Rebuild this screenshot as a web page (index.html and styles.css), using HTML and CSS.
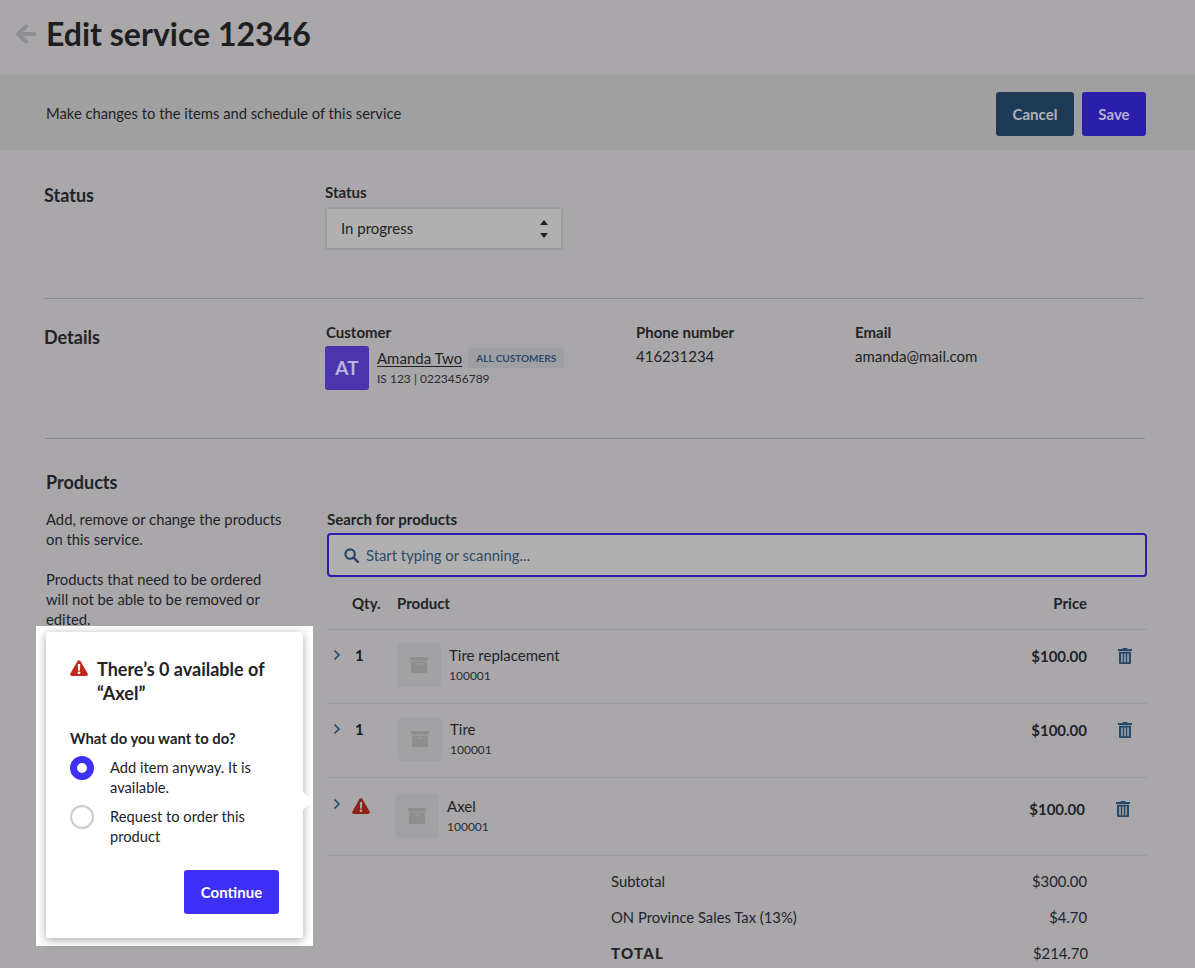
FILE: index.html
```html
<!DOCTYPE html>
<html lang="en">
<head>
<meta charset="utf-8">
<title>Edit service 12346</title>
<link rel="stylesheet" href="styles.css">
</head>
<body>
<svg class="defs" width="0" height="0" aria-hidden="true">
  <symbol id="warn" viewBox="0 0 18 16"><path fill-rule="evenodd" d="M9 0.2c.7 0 1.3.4 1.6 1l7 12.2c.7 1.2-.2 2.5-1.5 2.5H1.9C.6 15.9-.3 14.6.4 13.4l7-12.2c.3-.6.9-1 1.6-1zM7.8 4.6l.3 5.6c0 .3.3.5.5.5h.8c.3 0 .5-.2.5-.5l.3-5.6c0-.3-.2-.6-.5-.6H8.3c-.3 0-.5.3-.5.6zM9 11.4a1.4 1.4 0 1 0 0 2.8 1.4 1.4 0 0 0 0-2.8z"/></symbol>
  <symbol id="box" viewBox="0 0 18 16"><path d="M0 0h18v3.6H0z"/><path fill-rule="evenodd" d="M1 4.6h16V16H1zM6.5 6.4v1.1h5V6.4z"/></symbol>
  <symbol id="trash" viewBox="0 0 14 16"><path fill-rule="evenodd" d="M5 0h4l.6 1.1H14v1.8H0V1.1h4.400zM1 3.800h12V15a1 1 0 0 1-1 1H2a1 1 0 0 1-1-1zM3.200 5.600v8.600h1.500V5.600zM6.250 5.600v8.600h1.500V5.600zM9.300 5.600v8.600h1.500V5.600z"/></symbol>
  <symbol id="chev" viewBox="0 0 8 12"><path d="M1.500 1.500L6 6l-4.500 4.500" fill="none" stroke="currentColor" stroke-width="1.700"/></symbol>
</svg>

<header class="top">
  <svg class="back" viewBox="0 0 22 22" width="22" height="22"><path d="M19.500 11H4M11 3.500L3 11l8 7.500" fill="none" stroke="#8e8d90" stroke-width="4" stroke-linecap="round" stroke-linejoin="round"/></svg>
  <h1>Edit service 12346</h1>
</header>

<div class="bar">
  <p>Make changes to the items and schedule of this service</p>
  <div class="actions">
    <button class="btn cancel">Cancel</button>
    <button class="btn save">Save</button>
  </div>
</div>

<section class="sec sec-status">
  <h2>Status</h2>
  <div>
    <div class="label">Status</div>
    <div class="select">
      <span>In progress</span>
      <span class="updown"><i class="up"></i><i class="down"></i></span>
    </div>
  </div>
</section>

<section class="sec sec-details">
  <h2>Details</h2>
  <div class="details">
    <div class="cust">
      <div class="label">Customer</div>
      <div class="cust-row">
        <div class="avatar">AT</div>
        <div class="cust-info">
          <div class="cust-name"><a>Amanda Two</a><span class="tag">ALL CUSTOMERS</span></div>
          <div class="small">IS 123 | 0223456789</div>
        </div>
      </div>
    </div>
    <div class="phone"><div class="label">Phone number</div><div class="val">416231234</div></div>
    <div class="email"><div class="label">Email</div><div class="val">amanda@mail.com</div></div>
  </div>
</section>

<section class="products">
  <div class="p-left">
    <h2>Products</h2>
    <p>Add, remove or change the products<br>on this service.</p>
    <p>Products that need to be ordered<br>will not be able to be removed or<br>edited.</p>
  </div>
  <div class="p-right">
    <div class="label">Search for products</div>
    <div class="search">
      <svg viewBox="0 0 16 16" width="15" height="15"><circle cx="6.500" cy="6.500" r="5" fill="none" stroke="#274666" stroke-width="2.300"/><path d="M10.300 10.300L15 15" stroke="#274666" stroke-width="2.600" stroke-linecap="round"/></svg>
      <span>Start typing or scanning...</span>
    </div>
    <div class="thead">
      <span class="th-qty">Qty.</span><span class="th-prod">Product</span><span class="th-price">Price</span>
    </div>

    <div class="row">
      <svg class="chev"><use href="#chev"/></svg>
      <div class="qty">1</div>
      <div class="thumb"><svg width="18" height="16"><use href="#box"/></svg></div>
      <div class="pname"><div>Tire replacement</div><div class="small">100001</div></div>
      <div class="price">$100.00</div>
      <svg class="trash" width="14" height="16"><use href="#trash"/></svg>
    </div>
    <div class="row row-b">
      <svg class="chev"><use href="#chev"/></svg>
      <div class="qty">1</div>
      <div class="thumb"><svg width="18" height="16"><use href="#box"/></svg></div>
      <div class="pname"><div>Tire</div><div class="small">100001</div></div>
      <div class="price">$100.00</div>
      <svg class="trash" width="14" height="16"><use href="#trash"/></svg>
    </div>
    <div class="row row-c">
      <svg class="chev"><use href="#chev"/></svg>
      <svg class="warn-dim" width="18" height="16"><use href="#warn"/></svg>
      <div class="thumb"><svg width="18" height="16"><use href="#box"/></svg></div>
      <div class="pname"><div>Axel</div><div class="small">100001</div></div>
      <div class="price">$100.00</div>
      <svg class="trash" width="14" height="16"><use href="#trash"/></svg>
    </div>

    <div class="totals">
      <div class="t-row"><span>Subtotal</span><span>$300.00</span></div>
      <div class="t-row"><span>ON Province Sales Tax (13%)</span><span>$4.70</span></div>
      <div class="t-row t-total"><span class="t-label">TOTAL</span><span>$214.70</span></div>
    </div>
  </div>
</section>

<div class="spot">
  <div class="pop">
    <div class="pop-title">
      <svg class="warn" width="18" height="16"><use href="#warn"/></svg>
      <h3>There’s 0 available of “Axel”</h3>
    </div>
    <div class="pop-q">What do you want to do?</div>
    <div class="opt"><span class="radio on"></span><span class="opt-t">Add item anyway. It is available.</span></div>
    <div class="opt"><span class="radio"></span><span class="opt-t">Request to order this product</span></div>
    <div class="pop-foot"><button class="btn go">Continue</button></div>
    <span class="arrow"></span>
  </div>
</div>
</body>
</html>
```

FILE: styles.css
```css
* { box-sizing: border-box; }
html, body { margin: 0; padding: 0; }
body {
  width: 1195px;
  height: 968px;
  overflow: hidden;
  position: relative;
  background: #a9a7aa;
  color: #232326;
  font: 400 15px/20px Lato, "Liberation Sans", sans-serif;
}
.defs { position: absolute; }
h1, h2, h3, p { margin: 0; }

.top { height: 74px; display: flex; align-items: center; padding: 0 0 7px 15px; }
.back { margin-right: 9px; flex: none; }
h1 { font-size: 32px; line-height: 40px; font-weight: 700; color: #1e1e21; }

.bar {
  height: 76px;
  background: #a0a0a1;
  display: flex;
  align-items: center;
  justify-content: space-between;
  padding: 0 49px 0 46px;
  border-top: 1px solid #a1a1a2;
}
.bar p { font-size: 14.75px; }
.actions { display: flex; gap: 8px; margin-top: 3px; }
.btn {
  height: 44px;
  border: 0;
  border-radius: 3px;
  font: 700 15px/20px Lato, "Liberation Sans", sans-serif;
  padding: 0 16px;
}
.cancel { background: #1e3a57; color: #aeb3b8; width: 78px; }
.save { background: #2a1eaa; color: #b2b0d8; width: 64px; }

h2 { font-size: 18px; line-height: 24px; font-weight: 700; color: #232326; }
.label { font-weight: 700; font-size: 15px; line-height: 20px; color: #232326; margin-top: -1px; }

.sec { display: grid; grid-template-columns: 281px 1fr; border-bottom: 1px solid #8c8b8e; }
.sec-status { height: 149px; margin: 0 52px 0 44px; padding-top: 33px; }
.select {
  width: 238px;
  height: 43px;
  margin-top: 5px;
  background: #b0b0b0;
  border: 2px solid #9d9d9f;
  border-radius: 3px;
  display: flex;
  align-items: center;
  justify-content: space-between;
  padding: 0 13px 2px 14px;
}
.updown { display: flex; flex-direction: column; gap: 8px; margin-top: 2px; }
.updown i { display: block; width: 0; height: 0; border-left: 4px solid transparent; border-right: 4px solid transparent; }
.up { border-bottom: 5px solid #1e1e21; }
.down { border-top: 5px solid #1e1e21; }

.sec-details { height: 140px; margin: 0 50px 0 45px; padding-top: 24px; grid-template-columns: 280px 1fr; }
.sec-details h2 { margin: 2px 0 0 -1px; }
.details { display: flex; }
.cust { width: 311px; }
.cust .label { margin-left: 1px; }
.phone { width: 219px; }
.val { margin-top: 4px; }
.cust-row { display: flex; gap: 8px; margin-top: 4px; }
.avatar {
  width: 44px; height: 44px;
  border-radius: 3px;
  background: #4a35ae;
  color: #b9b4dc;
  font-size: 19px;
  font-weight: 700;
  display: flex; align-items: center; justify-content: center;
}
.cust-info { padding-top: 2px; }
.cust-name { display: flex; align-items: center; gap: 6px; height: 20px; }
.cust-name a { text-decoration: underline; text-underline-offset: 2px; }
.tag {
  background: #9e9fa2;
  color: #2b4a6b;
  font-size: 10px;
  font-weight: 700;
  line-height: 20px;
  padding: 0 8px;
  border-radius: 3px;
}
.small { font-size: 12px; line-height: 20px; color: #2b2b2e; }
.cust-info .small { margin-top: 1px; }

.products { display: grid; grid-template-columns: 281px 820px; padding: 31px 0 0 46px; }
.p-left h2 { margin-bottom: 15px; }
.p-left p { font-size: 14.8px; width: 260px; margin-bottom: 20px; white-space: nowrap; }
.p-right { padding-top: 40px; }
.search {
  height: 44px;
  margin-top: 4px;
  border: 2px solid #2a1eaa;
  border-radius: 4px;
  background: #b0b0b0;
  display: flex;
  align-items: center;
  gap: 7px;
  padding-left: 15px;
  color: #2e4a66;
  font-size: 14.8px;
}
.thead { height: 53px; border-bottom: 1px solid #9b9a9d; display: flex; align-items: center; font-weight: 700; font-size: 15px; padding: 0 60px 1px 25px; }
.th-qty { width: 45px; }
.th-prod { flex: 1; }

.row {
  height: 74px;
  border-bottom: 1px solid #9b9a9d;
  display: flex;
  align-items: flex-start;
  padding-top: 13px;
}
.row-c { height: 78px; padding-top: 16px; }
.chev { width: 8px; height: 12px; color: #2b4a6b; margin: 6px 11px 0 6px; flex: none; }
.row-c .chev { margin-top: 4px; }
.qty { width: 45px; padding-left: 3px; font-weight: 700; color: #1a1a1d; margin-top: 2px; flex: none; }
.warn-dim { fill: #8f2015; margin: 4px 27px 0 0; flex: none; }
.thumb {
  width: 44px; height: 44px;
  border-radius: 4px;
  background: #a2a1a3;
  display: flex; align-items: center; justify-content: center;
  flex: none;
  fill: #8e8e8f;
}
.row-b .thumb { margin-left: 1px; }
.row-c .thumb { margin-left: -2px; }
.pname { margin-left: 8px; margin-top: 2px; flex: 1; }
.pname .small { margin-top: 1px; }
.price { font-weight: 700; margin-top: 3px; }
.row-c .price { margin-top: 5px; }
.trash { fill: #26486b; margin: 5px 15px 0 31px; flex: none; }
.row-c .trash { margin-top: 7px; margin-right: 17px; }

.totals { margin-left: 284px; padding-top: 7px; margin-right: 60px; }
.t-row { height: 36px; display: flex; justify-content: space-between; align-items: center; font-size: 14.8px; }
.t-label { font-size: 15px; font-weight: 900; letter-spacing: 1.200px; }
.t-total span:last-child { margin-right: -1px; }

.spot {
  position: absolute;
  left: 36px; top: 626px;
  width: 277px; height: 320px;
  background: #fff;
  padding: 6px 10px 8px;
}
.pop {
  position: relative;
  height: 306px;
  background: #fff;
  border-radius: 3px;
  box-shadow: 0 2px 10px rgba(0,0,0,.35);
  padding: 25px 24px 0;
}
.pop-title { display: flex; gap: 9px; }
.warn { fill: #c02a1c; margin-top: 3px; flex: none; }
h3 { font-size: 18px; line-height: 24px; font-weight: 700; color: #232326; }
.pop-q { margin: 23px 0 8px; font-size: 14.8px; font-weight: 700; }
.opt { display: flex; gap: 16px; margin-top: 7px; font-size: 14.7px; }
.radio { width: 24px; height: 24px; border-radius: 50%; flex: none; border: 2px solid #cccccc; background: #fff; }
.radio.on { border: 7px solid #3d2ff5; }
.opt-t { padding: 1px 0; width: 150px; }
.pop-foot { display: flex; justify-content: flex-end; margin-top: 23px; }
.go { background: #3d2ff5; color: #fff; width: 95px; padding: 0; }
.arrow {
  position: absolute;
  left: 257px; top: 160px;
  width: 10px; height: 18px;
  background: #fff;
  clip-path: polygon(0 0, 100% 50%, 0 100%);
}
```
